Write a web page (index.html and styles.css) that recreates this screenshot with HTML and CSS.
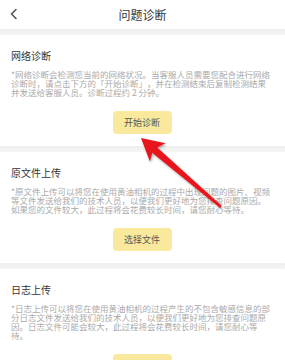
FILE: index.html
```html
<!DOCTYPE html>
<html lang="zh-CN">
<head>
<meta charset="utf-8">
<link rel="stylesheet" href="styles.css">
</head>
<body>
<div class="page">
  <header class="topbar">
    <svg class="back" width="10" height="12" viewBox="0 0 10 12"><path d="M7 1.5 L2.5 6 L7 10.5" fill="none" stroke="#555" stroke-width="1.6" stroke-linecap="round" stroke-linejoin="round"/></svg>
    <div class="title">问题诊断</div>
  </header>
  <div class="band"></div>
  <section class="card">
    <h2 class="card-title">网络诊断</h2>
    <p class="desc">*网络诊断会检测您当前的网络状况。当客服人员需要您配合进行网络诊断时，请点击下方的「开始诊断」，并在检测结束后复制检测结果并发送给客服人员。诊断过程约 2 分钟。</p>
    <div class="btn-row"><button class="btn">开始诊断</button></div>
  </section>
  <div class="band"></div>
  <section class="card">
    <h2 class="card-title">原文件上传</h2>
    <p class="desc">*原文件上传可以将您在使用黄油相机的过程中出现问题的图片、视频等文件发送给我们的技术人员，以便我们更好地为您排查问题原因。如果您的文件较大，此过程将会花费较长时间，请您耐心等待。</p>
    <div class="btn-row"><button class="btn">选择文件</button></div>
  </section>
  <div class="band"></div>
  <section class="card">
    <h2 class="card-title">日志上传</h2>
    <p class="desc">*日志上传可以将您在使用黄油相机的过程产生的不包含敏感信息的部分日志文件发送给我们的技术人员，以便我们更好地为您排查问题原因。日志文件可能会较大，此过程将会花费较长时间，请您耐心等待。</p>
    <div class="btn-row"><button class="btn">上传日志</button></div>
  </section>
  <svg class="arrow" width="285" height="360" viewBox="0 0 285 360">
    <defs>
      <filter id="sh" x="-20%" y="-20%" width="140%" height="140%">
        <feDropShadow dx="1" dy="1.5" stdDeviation="1.2" flood-color="#000" flood-opacity="0.35"/>
      </filter>
    </defs>
    <polygon filter="url(#sh)" fill="#e8131b" points="141,138 165.5,143.3 157.2,147.4 221.8,206.1 220.2,207.9 152.2,152.7 149.9,161.5"/>
  </svg>
</div>
</body>
</html>
```
FILE: styles.css
```css
* { box-sizing: border-box; }
html, body { margin: 0; padding: 0; background: #fff; }
body {
  font-family: "Noto Sans CJK SC", "Noto Sans", sans-serif;
  width: 285px;
  height: 360px;
  overflow: hidden;
}
.page { position: relative; width: 285px; height: 360px; overflow: hidden; }
.topbar {
  height: 29px;
  position: relative;
  display: flex;
  align-items: center;
  justify-content: center;
  background: #fff;
}
.back { position: absolute; left: 9px; top: 8px; }
.title { font-size: 12px; color: #333; line-height: 14px; }
.band { height: 6px; background: linear-gradient(#eeeeee, #f5f5f5); }
.card { padding: 13px 12px 12px 11px; }
.card-title {
  margin: 0;
  font-size: 10px;
  font-weight: 400;
  color: #333;
  line-height: 16px;
}
.desc {
  margin: 6px 0 0;
  font-size: 8.5px;
  line-height: 9px;
  color: #aaa;
  text-spacing-trim: space-all;
}
.btn-row { display: flex; justify-content: center; margin-top: 14px; }
.btn {
  width: 59px;
  height: 23px;
  border: none;
  border-radius: 4px;
  background: #f9e99c;
  color: #555;
  font-family: inherit;
  font-size: 9px;
  padding: 0;
}
.arrow { position: absolute; left: 0; top: 0; pointer-events: none; }
```
